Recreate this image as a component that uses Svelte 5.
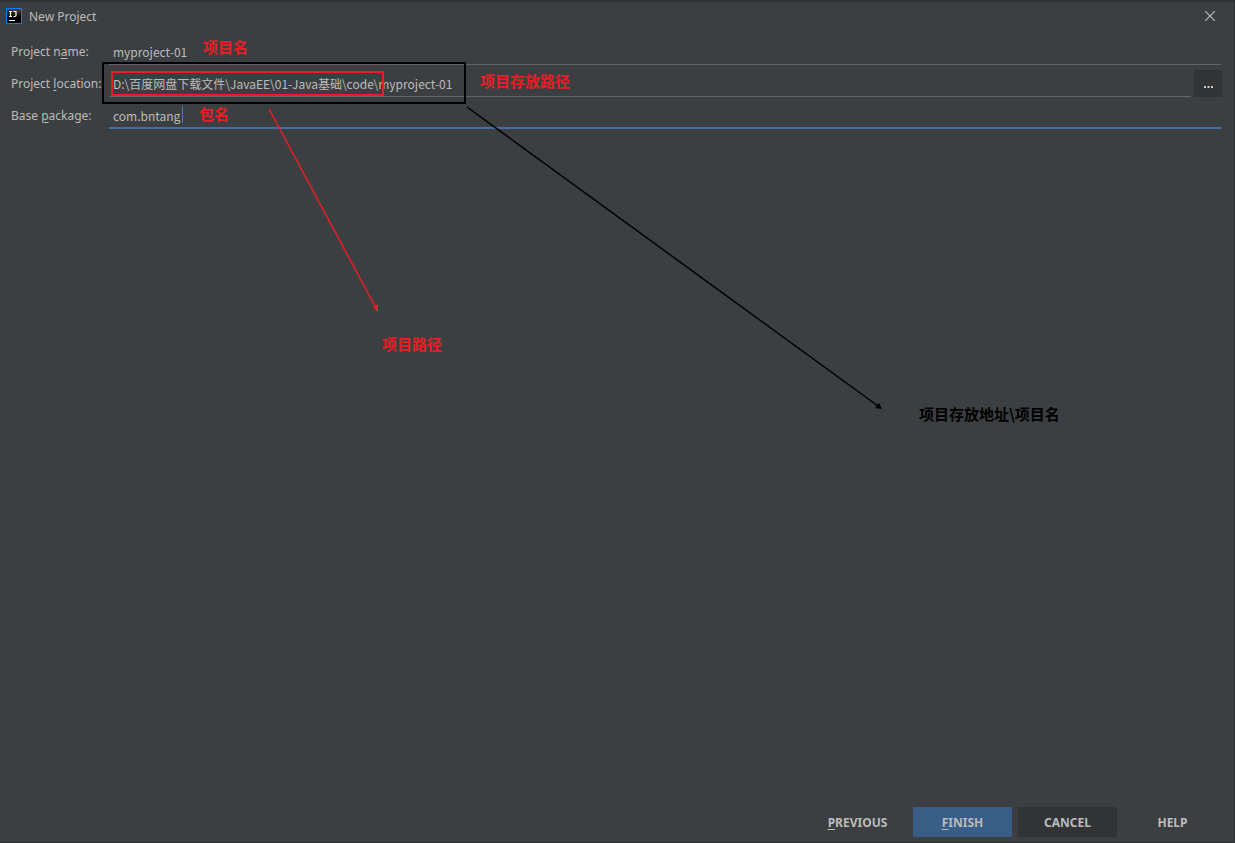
<script>
	let name = $state('myproject-01');
	let location = $state('D:\\百度网盘下载文件\\JavaEE\\01-Java基础\\code\\myproject-01');
	let base = $state('com.bntang');
</script>

<div class="dialog">
	<header>
		<svg class="logo" width="16" height="16" viewBox="0 0 16 16" aria-hidden="true">
			<defs>
				<linearGradient id="tile" x1="0" y1="0" x2="0" y2="1">
					<stop offset="0" stop-color="#444" />
					<stop offset="0.6" stop-color="#000" />
				</linearGradient>
			</defs>
			<rect width="16" height="16" fill="#087cfa" />
			<rect x="1" y="1" width="14" height="14" fill="url(#tile)" />
			<path d="M3 3.500h3M4.500 3.500v5M3 8.500h3M7.500 3.500h3M10 3.500v3.800q0 1.200-1.200 1.200H7.500M3 12.500h6" fill="none" stroke="#fff" stroke-width="1.200" />
		</svg>
		<h1>New Project</h1>
		<button class="close" aria-label="Close">
			<svg width="10" height="10" viewBox="0 0 10 10"><path d="M0 0l10 10M10 0L0 10" stroke="#bbb" stroke-width="1.200" /></svg>
		</button>
	</header>

	<form>
		<div class="row">
			<label for="name">Project n<u>a</u>me:</label>
			<input id="name" type="text" bind:value={name} />
		</div>
		<div class="row">
			<label for="location">Project <u>l</u>ocation:</label>
			<input id="location" type="text" bind:value={location} />
			<button class="browse" type="button" aria-label="Browse">
				<svg width="9" height="2" viewBox="0 0 9 2"><path d="M0 1h2M3.500 1h2M7 1h2" stroke="#ccc" stroke-width="2" /></svg>
			</button>
		</div>
		<div class="row active">
			<label for="base">Base <u>p</u>ackage:</label>
			<input id="base" type="text" bind:value={base} />
			<span class="caret"></span>
		</div>
	</form>

	<footer>
		<button><u>P</u>REVIOUS</button>
		<button class="primary"><u>F</u>INISH</button>
		<button class="dark">CANCEL</button>
		<button>HELP</button>
	</footer>

	<!-- notes drawn over the dialog -->
	<div class="notes">
		<svg width="900" height="430" viewBox="0 0 900 430" aria-hidden="true">
			<rect x="103" y="63" width="362" height="40" fill="none" stroke="#000" stroke-width="2" />
			<rect x="112" y="72" width="271" height="23" fill="none" stroke="#ed1c24" stroke-width="2" />
			<path d="M269 109L376 308" stroke="#ed1c24" stroke-width="1.500" />
			<path d="M378 312l-5-5 5-3z" fill="#ed1c24" />
			<path d="M467 107L878 406" stroke="#000" stroke-width="1.500" />
			<path d="M882 409l-7-1 4-5z" fill="#000" />
		</svg>
		<span class="note name">项目名</span>
		<span class="note store">项目存放路径</span>
		<span class="note package">包名</span>
		<span class="note path">项目路径</span>
		<span class="note full">项目存放地址\项目名</span>
	</div>
</div>

<style>
	:global(body) {
		margin: 0;
		background: #3c3f41;
	}

	.dialog {
		position: relative;
		display: flex;
		flex-direction: column;
		box-sizing: border-box;
		min-height: 100vh;
		border: solid #2f3234;
		border-width: 2px 1px 1px 0;
		background: #3c3f41;
		color: #bbb;
		font: 12px/18px 'Noto Sans', 'Noto Sans CJK SC', sans-serif;
	}

	header {
		display: flex;
		align-items: center;
		height: 28px;
		padding: 0 19px 0 6px;
	}

	h1 {
		flex: 1;
		margin: 0 0 0 7px;
		font-size: 12px;
		line-height: 20px;
		font-weight: 400;
		padding-top: 2px;
	}

	button,
	input {
		border: 0;
		padding: 0;
		background: none;
		color: inherit;
		font: inherit;
	}

	.close {
		display: flex;
	}

	u {
		text-underline-offset: 2px;
	}

	form {
		display: grid;
		gap: 6px;
		padding: 8px 13px 0 11px;
	}

	.row {
		position: relative;
		display: grid;
		grid-template-columns: 98px 1fr auto;
		align-items: center;
		height: 26px;
	}

	label {
		white-space: nowrap;
	}

	input {
		box-sizing: border-box;
		min-width: 0;
		height: 27px;
		padding: 0 4px;
		border-bottom: 1px solid #646464;
		outline: none;
		font-family: 'Noto Sans CJK SC', sans-serif;
	}

	.active input {
		padding-top: 2px;
		border-bottom: 2px solid #466d9f;
	}

	.caret {
		position: absolute;
		left: 171px;
		top: 4px;
		width: 1px;
		height: 17px;
		background: #4a78b5;
	}

	.browse {
		display: flex;
		align-items: center;
		justify-content: center;
		width: 28px;
		height: 27px;
		margin: 0 -1px 0 3px;
		padding-top: 6px;
		background: #313335;
	}

	footer {
		display: flex;
		justify-content: flex-end;
		gap: 6px;
		margin-top: auto;
		padding: 0 12px 5px;
	}

	footer button {
		width: 99px;
		height: 30px;
		padding-top: 1px;
		font-weight: 700;
	}

	.primary {
		background: #385d87;
	}

	.dark {
		background: #313335;
	}

	.notes {
		position: absolute;
		left: 0;
		top: -2px;
		pointer-events: none;
	}

	.notes svg {
		display: block;
	}

	.note {
		position: absolute;
		color: #ed1c24;
		font: bold 15px/20px 'Noto Sans CJK SC', sans-serif;
		white-space: nowrap;
	}

	.name {
		left: 203px;
		top: 37px;
	}

	.store {
		left: 480px;
		top: 71px;
	}

	.package {
		left: 199px;
		top: 104px;
	}

	.path {
		left: 382px;
		top: 334px;
	}

	.full {
		left: 919px;
		top: 404px;
		color: #000;
	}
</style>
